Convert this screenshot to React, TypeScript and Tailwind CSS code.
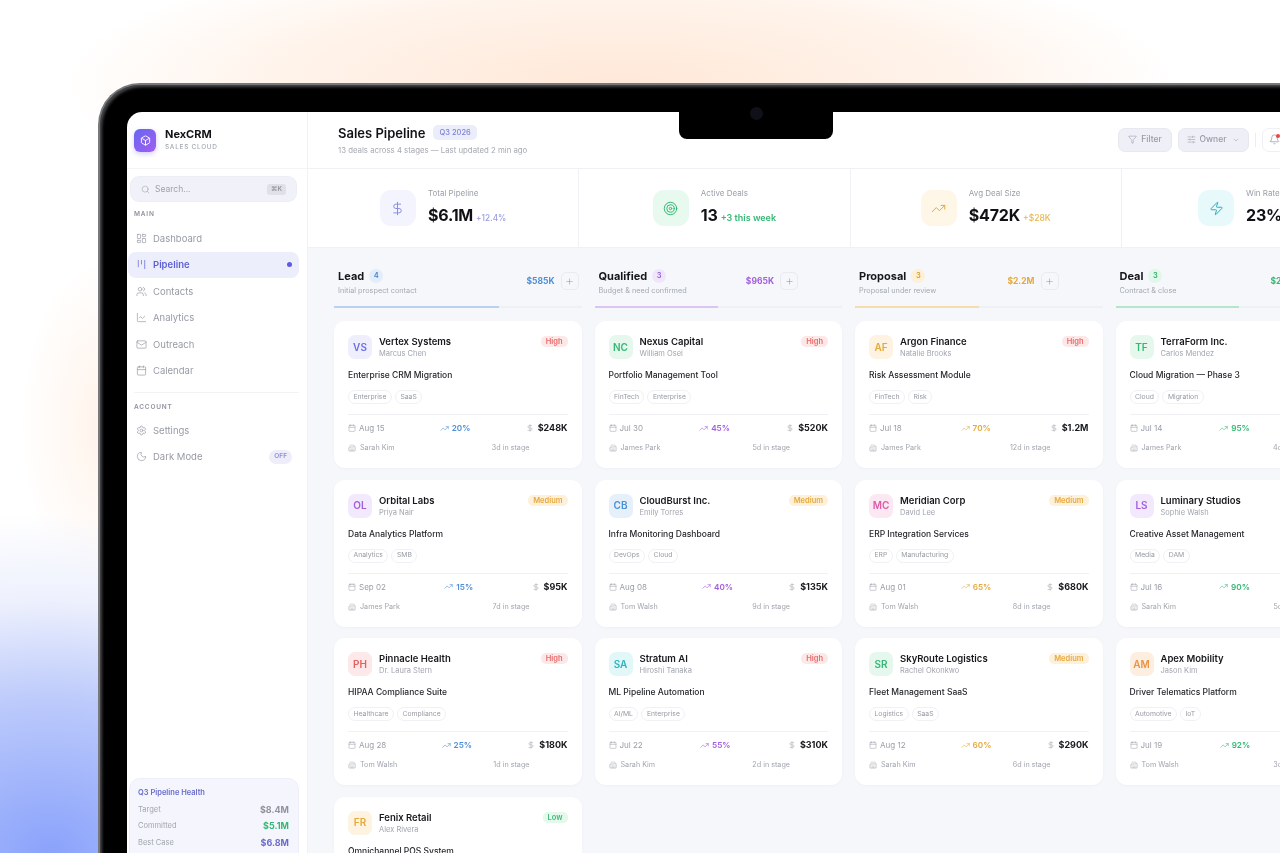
import React from "react";
import {
  Box, Search, LayoutDashboard, Kanban, Users, ChartLine, Mail, Calendar, Settings, Moon,
  Filter, SlidersHorizontal, ChevronDown, Bell, DollarSign, Target, TrendingUp, Zap, Plus, Building2,
} from "lucide-react";

type Deal = {
  av: string; avC: string; co: string; person: string; title: string; tags: string[];
  pri: "High" | "Medium" | "Low"; date: string; pct: string; amt: string; owner: string; days: string;
};

const indigo = "bg-[#eeeefd] text-[#6d6ee8]";
const green = "bg-[#e6f8ee] text-[#35b873]";
const amber = "bg-[#fdf3e0] text-[#e6a93c]";
const purple = "bg-[#f2e9fc] text-[#a15fdc]";
const blue = "bg-[#e6f0fb] text-[#4a90d9]";
const pink = "bg-[#fce8f3] text-[#dc5aa6]";
const red = "bg-[#fde9e9] text-[#e56060]";
const teal = "bg-[#e2f7f8] text-[#2bb5c0]";
const orange = "bg-[#fdeee0] text-[#ea9340]";

const columns: {
  name: string; count: number; sub: string; total: string; color: string; countC: string; amtC: string;
  bar: string; trend: string; headPr: string; deals: Deal[];
}[] = [
  {
    name: "Lead", count: 4, sub: "Initial prospect contact", total: "$585K", color: "bg-[#bcd0f0]", countC: "bg-[#e3edfa] text-[#4a86cf]",
    amtC: "text-[#4f8fd6]", bar: "w-2/3", trend: "text-[#4f8fd6]", headPr: "pr-[3px]",
    deals: [
      { av: "VS", avC: indigo, co: "Vertex Systems", person: "Marcus Chen", title: "Enterprise CRM Migration", tags: ["Enterprise", "SaaS"], pri: "High", date: "Aug 15", pct: "20%", amt: "$248K", owner: "Sarah Kim", days: "3d in stage" },
      { av: "OL", avC: purple, co: "Orbital Labs", person: "Priya Nair", title: "Data Analytics Platform", tags: ["Analytics", "SMB"], pri: "Medium", date: "Sep 02", pct: "15%", amt: "$95K", owner: "James Park", days: "7d in stage" },
      { av: "PH", avC: red, co: "Pinnacle Health", person: "Dr. Laura Stern", title: "HIPAA Compliance Suite", tags: ["Healthcare", "Compliance"], pri: "High", date: "Aug 28", pct: "25%", amt: "$180K", owner: "Tom Walsh", days: "1d in stage" },
      { av: "FR", avC: amber, co: "Fenix Retail", person: "Alex Rivera", title: "Omnichannel POS System", tags: ["Retail", "POS"], pri: "Low", date: "Sep 20", pct: "10%", amt: "$62K", owner: "Sarah Kim", days: "2d in stage" },
    ],
  },
  {
    name: "Qualified", count: 3, sub: "Budget & need confirmed", total: "$965K", color: "bg-[#dcc5f1]", countC: "bg-[#f0e6fb] text-[#9b5fd6]",
    amtC: "text-[#a25fdc]", bar: "w-1/2", trend: "text-[#a25fdc]", headPr: "pr-[44px]",
    deals: [
      { av: "NC", avC: green, co: "Nexus Capital", person: "William Osei", title: "Portfolio Management Tool", tags: ["FinTech", "Enterprise"], pri: "High", date: "Jul 30", pct: "45%", amt: "$520K", owner: "James Park", days: "5d in stage" },
      { av: "CB", avC: blue, co: "CloudBurst Inc.", person: "Emily Torres", title: "Infra Monitoring Dashboard", tags: ["DevOps", "Cloud"], pri: "Medium", date: "Aug 08", pct: "40%", amt: "$135K", owner: "Tom Walsh", days: "9d in stage" },
      { av: "SA", avC: teal, co: "Stratum AI", person: "Hiroshi Tanaka", title: "ML Pipeline Automation", tags: ["AI/ML", "Enterprise"], pri: "High", date: "Jul 22", pct: "55%", amt: "$310K", owner: "Sarah Kim", days: "2d in stage" },
    ],
  },
  {
    name: "Proposal", count: 3, sub: "Proposal under review", total: "$2.2M", color: "bg-[#f4dcaf]", countC: "bg-[#fcf0d8] text-[#dd9f30]",
    amtC: "text-[#e6a93c]", bar: "w-1/2", trend: "text-[#e6a93c]", headPr: "pr-[44px]",
    deals: [
      { av: "AF", avC: amber, co: "Argon Finance", person: "Natalie Brooks", title: "Risk Assessment Module", tags: ["FinTech", "Risk"], pri: "High", date: "Jul 18", pct: "70%", amt: "$1.2M", owner: "James Park", days: "12d in stage" },
      { av: "MC", avC: pink, co: "Meridian Corp", person: "David Lee", title: "ERP Integration Services", tags: ["ERP", "Manufacturing"], pri: "Medium", date: "Aug 01", pct: "65%", amt: "$680K", owner: "Tom Walsh", days: "8d in stage" },
      { av: "SR", avC: green, co: "SkyRoute Logistics", person: "Rachel Okonkwo", title: "Fleet Management SaaS", tags: ["Logistics", "SaaS"], pri: "Medium", date: "Aug 12", pct: "60%", amt: "$290K", owner: "Sarah Kim", days: "6d in stage" },
    ],
  },
  {
    name: "Deal", count: 3, sub: "Contract & close", total: "$2.1M", color: "bg-[#b5e6ca]", countC: "bg-[#e1f7ea] text-[#33b26e]",
    amtC: "text-[#35b873]", bar: "w-1/2", trend: "text-[#35b873]", headPr: "pr-[44px]",
    deals: [
      { av: "TF", avC: green, co: "TerraForm Inc.", person: "Carlos Mendez", title: "Cloud Migration — Phase 3", tags: ["Cloud", "Migration"], pri: "High", date: "Jul 14", pct: "95%", amt: "$940K", owner: "James Park", days: "4d in stage" },
      { av: "LS", avC: purple, co: "Luminary Studios", person: "Sophie Walsh", title: "Creative Asset Management", tags: ["Media", "DAM"], pri: "Medium", date: "Jul 16", pct: "90%", amt: "$420K", owner: "Sarah Kim", days: "5d in stage" },
      { av: "AM", avC: orange, co: "Apex Mobility", person: "Jason Kim", title: "Driver Telematics Platform", tags: ["Automotive", "IoT"], pri: "High", date: "Jul 19", pct: "92%", amt: "$760K", owner: "Tom Walsh", days: "3d in stage" },
    ],
  },
];

const priC = {
  High: "bg-[#fde8e8] text-[#e86a6a]",
  Medium: "bg-[#fdf1dc] text-[#e8a93f]",
  Low: "bg-[#e4f8ec] text-[#3dbb78]",
};

function NavItem({ icon: Icon, label, active, right }: { icon: any; label: string; active?: boolean; right?: React.ReactNode }) {
  return (
    <div className={active
      ? "flex h-[26.5px] items-center gap-[6px] rounded-[8px] bg-[#eceefc] pl-[8px] pr-[7px] text-[#5e5fd6] font-semibold"
      : "flex h-[26.5px] items-center gap-[6px] pl-[8px] pr-[7px] text-[#979ba5]"}>
      <Icon size={11} strokeWidth={1.5} className="shrink-0" />
      <span className="text-[9.5px] leading-none">{label}</span>
      {right && <span className="ml-auto">{right}</span>}
    </div>
  );
}

function Stat({ icon: Icon, iconC, label, value, delta, deltaC }: { icon: any; iconC: string; label: string; value: string; delta: string; deltaC: string }) {
  return (
    <div className="flex w-[271.3px] shrink-0 items-center justify-center gap-[12px] border-r border-[#f0f1f4]">
      <div className={`flex h-[36px] w-[36px] items-center justify-center rounded-[11px] ${iconC}`}>
        <Icon size={15} strokeWidth={1.6} />
      </div>
      <div className="mb-[4px]">
        <div className="text-[8px] leading-[10px] text-[#9a9ea8]">{label}</div>
        <div className="mt-[7px] flex items-baseline gap-[3px] whitespace-nowrap">
          <span className="text-[16px] font-bold leading-[20px] tracking-[-0.2px] text-[#101114]">{value}</span>
          <span className={deltaC}>{delta}</span>
        </div>
      </div>
    </div>
  );
}

function DealCard({ d, trend }: { d: Deal; trend: string }) {
  return (
    <div className="h-[147px] rounded-[11px] bg-white px-[14px] pt-[14px] shadow-[0_1px_3px_rgba(30,40,80,0.03)]">
      <div className="flex items-start gap-[7px]">
        <div className={`flex h-[24px] w-[24px] shrink-0 items-center justify-center rounded-[7px] text-[10px] font-semibold ${d.avC}`}>{d.av}</div>
        <div className="min-w-0 flex-1">
          <div className="mt-[1px] text-[9.5px] font-semibold leading-[12px] text-[#17181c]">{d.co}</div>
          <div className="text-[7.5px] leading-[11px] text-[#a1a5ae]">{d.person}</div>
        </div>
        <span className={`mt-[1px] rounded-[5px] px-[5px] text-[7.5px] font-semibold leading-[11px] ${priC[d.pri]}`}>{d.pri}</span>
      </div>
      <div className="mt-[10px] text-[8.5px] font-medium leading-[12px] text-[#25272d]">{d.title}</div>
      <div className="mt-[9px] flex gap-[3px]">
        {d.tags.map((t) => (
          <span key={t} className="flex h-[14px] items-center rounded-full border border-[#f0f1f4] px-[4.5px] text-[6.8px] text-[#969aa3]">{t}</span>
        ))}
      </div>
      <div className="mt-[10px] flex items-center justify-between border-t border-[#f0f1f4] pt-[7px] leading-[12px]">
        <span className="flex items-center gap-[3px] text-[8px] text-[#999da6]"><Calendar size={8} strokeWidth={1.5} />{d.date}</span>
        <span className={`flex items-center gap-[3px] text-[8.2px] font-semibold ${trend}`}><TrendingUp size={9} strokeWidth={1.5} />{d.pct}</span>
        <span className="flex items-center gap-[4px] text-[9px] font-bold text-[#17181c]"><DollarSign size={8} strokeWidth={1.5} className="text-[#999da6]" />{d.amt}</span>
      </div>
      <div className="mt-[8px] flex items-center justify-between pr-[38px] text-[7.2px] leading-[12px] text-[#a1a5ae]">
        <span className="flex items-center gap-[4px]"><Building2 size={8} strokeWidth={1.3} />{d.owner}</span>
        <span>{d.days}</span>
      </div>
    </div>
  );
}

export default function App() {
  return (
    <div className="h-[853px] w-[1280px] overflow-hidden bg-white bg-[radial-gradient(ellipse_560px_140px_at_620px_85px,#ffe8d8_0%,#fff3ea_60%,rgba(255,255,255,0)_100%),radial-gradient(ellipse_430px_340px_at_50px_853px,#8aa2fb_0%,#bccafb_45%,#eef1fd_75%,rgba(255,255,255,0)_100%),radial-gradient(ellipse_90px_170px_at_110px_425px,#fff2e9_0%,rgba(255,255,255,0)_100%)] pl-[98px] pt-[83px] font-['Inter','Liberation_Sans',sans-serif]">
      <div className="relative w-[1320px] rounded-tl-[42px] border-l-2 border-t-2 border-[#77787c] bg-black pl-[27px] pt-[27px] shadow-[inset_2px_2px_3px_rgba(90,90,95,0.8)] blur-[0.3px]">
        <div className="absolute left-[579px] top-[27px] z-10 flex h-[27px] w-[154px] justify-center rounded-b-[8px] bg-black">
          <div className="-mt-[5px] h-[13px] w-[13px] rounded-full bg-[#101118]" />
        </div>
        <div className="flex h-[760px] w-[1266px] overflow-hidden rounded-tl-[15px] bg-white">
          {/* Sidebar */}
          <aside className="flex w-[181px] shrink-0 flex-col border-r border-[#f0f1f4] pb-[8px]">
            <div className="flex h-[57px] shrink-0 items-center gap-[9px] border-b border-[#f3f4f6] pl-[7px]">
              <div className="flex h-[23px] w-[22px] items-center justify-center rounded-[6px] bg-gradient-to-br from-[#6366f1] to-[#a25cf0] text-white shadow-[0_2px_5px_rgba(110,90,240,0.3)]">
                <Box size={11} strokeWidth={2} />
              </div>
              <div>
                <div className="text-[11px] font-bold leading-[13px] text-[#121317]">NexCRM</div>
                <div className="mt-[2px] text-[6.5px] font-medium leading-[9px] tracking-[0.7px] text-[#a5a9b2]">SALES CLOUD</div>
              </div>
            </div>
            <div className="ml-[4px] mr-[11px] mt-[8px] flex h-[24px] items-center gap-[5px] rounded-[8px] bg-[#f1f2f9] px-[10px] text-[#9ea2ac] shadow-[0_0_0_1px_#eceef5]">
              <Search size={9} strokeWidth={1.5} />
              <span className="text-[8.5px]">Search...</span>
              <span className="ml-auto rounded-[3px] bg-[#e0e1e8] px-[4px] py-[1px] text-[6.5px] font-semibold leading-[9px] text-[#9196a0]">⌘K</span>
            </div>
            <div className="ml-[7px] mt-[9px] text-[6.5px] font-semibold leading-[9px] tracking-[0.8px] text-[#8e929c]">MAIN</div>
            <nav className="ml-[1px] mr-[8px] mt-[6px] flex flex-col">
              <NavItem icon={LayoutDashboard} label="Dashboard" />
              <NavItem icon={Kanban} label="Pipeline" active right={<span className="block h-[5px] w-[5px] rounded-full bg-[#5b5ce0]" />} />
              <NavItem icon={Users} label="Contacts" />
              <NavItem icon={ChartLine} label="Analytics" />
              <NavItem icon={Mail} label="Outreach" />
              <NavItem icon={Calendar} label="Calendar" />
            </nav>
            <div className="ml-[7px] mr-[8px] mt-[8px] border-t border-[#f2f3f5]" />
            <div className="ml-[7px] mt-[10px] text-[6.5px] font-semibold leading-[9px] tracking-[0.8px] text-[#8e929c]">ACCOUNT</div>
            <div className="ml-[1px] mr-[8px] mt-[5px] flex flex-col">
              <NavItem icon={Settings} label="Settings" />
              <NavItem icon={Moon} label="Dark Mode" right={<span className="block rounded-full bg-[#eeeefb] px-[5px] py-[2.5px] text-[6.5px] font-semibold leading-[9px] text-[#8d8ed8]">OFF</span>} />
            </div>
            <div className="ml-[2px] mr-[8px] mt-auto rounded-[11px] border border-[#eceefa] bg-[#f5f6fd] pb-[12.5px] pl-[8px] pr-[9px] pt-[8px]">
              <div className="text-[7.5px] font-semibold leading-[11px] text-[#6a6bc9]">Q3 Pipeline Health</div>
              <div className="mt-[3px] flex flex-col">
                {[
                  ["Target", "$8.4M", "text-[#8e929c]"],
                  ["Committed", "$5.1M", "text-[#35b873]"],
                  ["Best Case", "$6.8M", "text-[#6a6bc9]"],
                ].map(([l, v, c]) => (
                  <div key={l} className="flex h-[16.5px] items-center justify-between">
                    <span className="text-[7.5px] text-[#a1a5ae]">{l}</span>
                    <span className={`text-[9px] font-bold ${c}`}>{v}</span>
                  </div>
                ))}
              </div>
            </div>
          </aside>

          {/* Main */}
          <main className="flex w-[1085px] shrink-0 flex-col">
            <header className="flex h-[57px] shrink-0 items-center border-b border-[#f0f1f4] pl-[30px]">
              <div className="w-[780px]">
                <div className="flex items-center gap-[8px]">
                  <span className="text-[13px] font-semibold leading-[16px] text-[#121317]">Sales Pipeline</span>
                  <span className="rounded-[5px] bg-[#ecedfb] px-[6px] py-[2px] text-[7.5px] font-medium leading-[11px] text-[#7d80d8]">Q3 2026</span>
                </div>
                <div className="mt-[4px] text-[7.8px] leading-[11px] text-[#a5a9b2]">13 deals across 4 stages — Last updated 2 min ago</div>
              </div>
              <div className="-mt-[1px] flex items-center gap-[6px]">
                <div className="flex h-[24px] w-[54px] items-center justify-center gap-[4px] rounded-[7px] border border-[#e8e9f0] bg-[#eff0f7] text-[8.5px] font-medium text-[#979ba5]">
                  <Filter size={9} strokeWidth={1.5} />Filter
                </div>
                <div className="flex h-[24px] w-[71px] items-center justify-center gap-[4px] rounded-[7px] border border-[#e8e9f0] bg-[#eff0f7] text-[8.5px] font-medium text-[#979ba5]">
                  <SlidersHorizontal size={9} strokeWidth={1.5} />Owner<ChevronDown size={8} strokeWidth={1.5} className="ml-[2px]" />
                </div>
                <div className="h-[14px] w-px bg-[#eceef2]" />
                <div className="relative flex h-[24px] w-[24px] items-center justify-center rounded-[7px] border border-[#eef0f3] text-[#8e929c]">
                  <Bell size={11} strokeWidth={1.5} />
                  <span className="absolute right-[5px] top-[5px] h-[4px] w-[4px] rounded-full bg-[#ef4444]" />
                </div>
              </div>
            </header>

            <section className="flex h-[79px] shrink-0 border-b border-[#f0f1f4]">
              <Stat icon={DollarSign} iconC="bg-[#f3f4fe] text-[#8c8fe0]" label="Total Pipeline" value="$6.1M" delta="+12.4%" deltaC="text-[8.3px] font-medium text-[#9c9ee0]" />
              <Stat icon={Target} iconC="bg-[#e8f9ef] text-[#35b873]" label="Active Deals" value="13" delta="+3 this week" deltaC="text-[9px] font-semibold text-[#35b873]" />
              <Stat icon={TrendingUp} iconC="bg-[#fef6e6] text-[#e6a93c]" label="Avg Deal Size" value="$472K" delta="+$28K" deltaC="text-[8.5px] font-medium text-[#e9b64f]" />
              <Stat icon={Zap} iconC="bg-[#e8f9fb] text-[#2aaebc]" label="Win Rate" value="23%" delta="+2.1 pts" deltaC="text-[8.5px] font-medium text-[#2aaebc]" />
            </section>

            <section className="flex flex-1 gap-[13px] bg-[#f5f7fb] pl-[26px] pt-[20px]">
              {columns.map((c) => (
                <div key={c.name} className="w-[247.5px] shrink-0">
                  <div className={`flex h-[38px] items-start justify-between pl-[4px] ${c.headPr}`}>
                    <div>
                      <div className="flex items-center gap-[5px]">
                        <span className="text-[11px] font-bold leading-[16px] text-[#17181c]">{c.name}</span>
                        <span className={`flex h-[14px] w-[14px] items-center justify-center rounded-full text-[7.5px] font-semibold ${c.countC}`}>{c.count}</span>
                      </div>
                      <div className="mt-[1px] text-[7.3px] leading-[11px] text-[#a5a9b2]">{c.sub}</div>
                    </div>
                    <div className="flex items-center gap-[6px] pt-[4px]">
                      <span className={`text-[8.5px] font-bold ${c.amtC}`}>{c.total}</span>
                      <span className="flex h-[18px] w-[18px] items-center justify-center rounded-[5px] border border-[#e9ebf0] text-[#9297a1]">
                        <Plus size={9} strokeWidth={1.5} />
                      </span>
                    </div>
                  </div>
                  <div className="h-[2px] bg-[#eef0f4]"><div className={`h-[2px] ${c.bar} ${c.color}`} /></div>
                  <div className="mt-[13px] flex flex-col gap-[11.5px]">
                    {c.deals.map((d) => <DealCard key={d.co} d={d} trend={c.trend} />)}
                  </div>
                </div>
              ))}
            </section>
          </main>
        </div>
      </div>
    </div>
  );
}
